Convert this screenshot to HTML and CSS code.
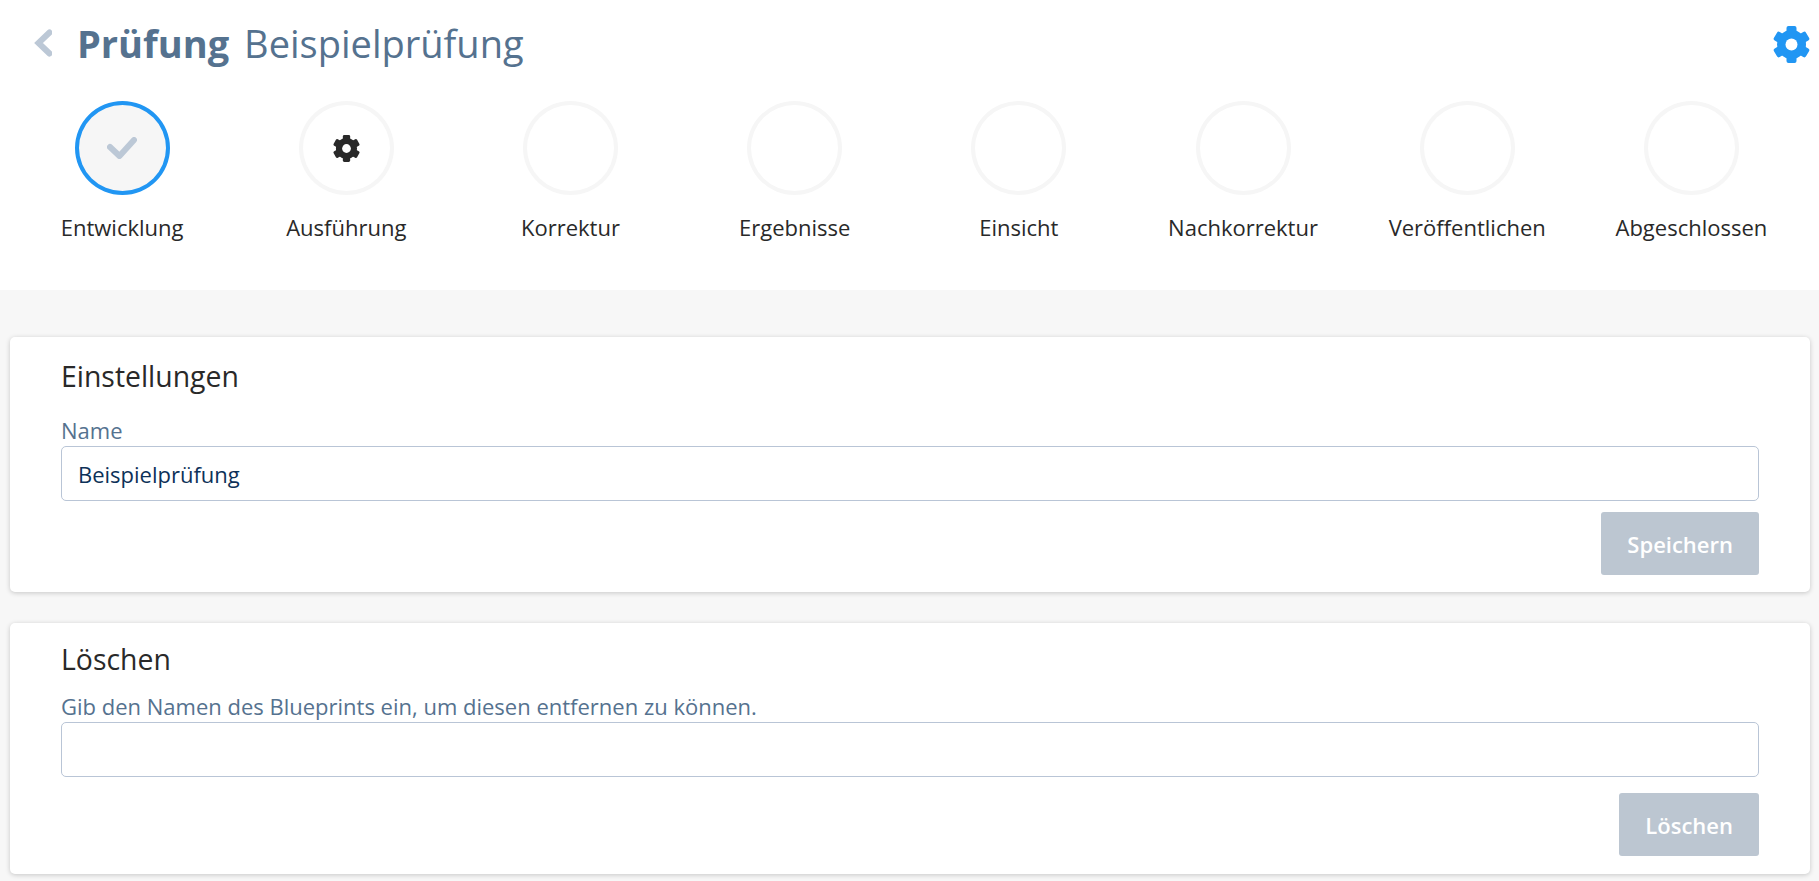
FILE: index.html
```html
<!DOCTYPE html>
<html lang="de">
<head>
<meta charset="utf-8">
<title>Prüfung Beispielprüfung</title>
<link rel="stylesheet" href="styles.css">
</head>
<body>
	<svg class="hidden">
		<symbol id="gear" viewBox="0 0 37 37">
			<circle cx="18.5" cy="18.5" r="10.2" fill="none" stroke="currentColor" stroke-width="8.6"/>
			<rect x="13.5" y="0" width="10" height="37" rx="2"/>
			<rect x="13.5" y="0" width="10" height="37" rx="2" transform="rotate(60 18.5 18.5)"/>
			<rect x="13.5" y="0" width="10" height="37" rx="2" transform="rotate(120 18.5 18.5)"/>
			<circle class="gear-hole" cx="18.5" cy="18.5" r="6"/>
		</symbol>
	</svg>

	<div class="top">
		<div class="head">
			<a class="back" href="#">
				<svg width="18" height="30" viewBox="0 0 18 30"><path d="M15.500 3.500 4.500 14l11 10.500" fill="none" stroke="#bcc8d6" stroke-width="6" stroke-linecap="round"/></svg>
			</a>
			<h1 class="page-title"><b>Prüfung</b> <span>Beispielprüfung</span></h1>
			<a class="settings" href="#"><svg width="37" height="37"><use href="#gear"/></svg></a>
		</div>
		<ul class="steps">
			<li>
				<div class="circle done">
					<svg width="30" height="22" viewBox="0 0 30 22"><path d="M3 10l9.500 9L27 3" fill="none" stroke="#bcc8d6" stroke-width="6" stroke-linejoin="round" stroke-linecap="round"/></svg>
				</div>
				Entwicklung
			</li>
			<li>
				<div class="circle running"><svg width="27" height="27"><use href="#gear"/></svg></div>
				Ausführung
			</li>
			<li><div class="circle"></div>Korrektur</li>
			<li><div class="circle"></div>Ergebnisse</li>
			<li><div class="circle"></div>Einsicht</li>
			<li><div class="circle"></div>Nachkorrektur</li>
			<li><div class="circle"></div>Veröffentlichen</li>
			<li><div class="circle"></div>Abgeschlossen</li>
		</ul>
	</div>

	<div class="content">
		<form class="card">
			<h2>Einstellungen</h2>
			<label for="name">Name</label>
			<input id="name" type="text" value="Beispielprüfung">
			<div class="actions"><button type="button">Speichern</button></div>
		</form>
		<form class="card card-delete">
			<h2>Löschen</h2>
			<label for="confirm">Gib den Namen des Blueprints ein, um diesen entfernen zu können.</label>
			<input id="confirm" type="text">
			<div class="actions"><button type="button">Löschen</button></div>
		</form>
	</div>
</body>
</html>
```

FILE: styles.css
```css
* {
	margin: 0;
	padding: 0;
	box-sizing: border-box;
}

html, body {
	height: 100%;
}

body {
	background: #f7f7f7;
	color: #292929;
	font-family: "Open Sans", "Liberation Sans", sans-serif;
	font-size: 22px;
	overflow: hidden;
}

.hidden {
	display: none;
}

.top {
	background: #fff;
	height: 290px;
	padding: 18px 10px 0;
}

.head {
	display: flex;
	align-items: center;
	height: 52px;
}

.back {
	display: flex;
	margin-left: 24px;
}

.page-title {
	flex: 1;
	margin-left: 25px;
	padding-bottom: 2px;
	color: #55728f;
	font-size: 38px;
	font-weight: 400;
	line-height: 50px;
	white-space: nowrap;
}

.page-title b {
	font-weight: 700;
	margin-right: 5px;
}

.settings {
	display: flex;
	color: #2196f3;
	fill: currentColor;
	margin-right: -1px;
}

.gear-hole {
	fill: #fff;
}

.steps {
	display: grid;
	grid-template-columns: repeat(8, 224.2px);
	list-style: none;
	margin-top: 31px;
	text-align: center;
	line-height: 30px;
}

.circle {
	display: flex;
	align-items: center;
	justify-content: center;
	width: 95px;
	height: 94px;
	margin: 0 auto 17px;
	border: 4px solid #f6f6f6;
	border-radius: 50%;
}

.circle.done {
	background: #f6f6f6;
	border-color: #2196f3;
}

.circle.running {
	color: #292929;
	fill: currentColor;
}

.content {
	padding: 47px 9px 0 10px;
}

.card {
	background: #fff;
	border-radius: 5px;
	box-shadow: 0 1px 5px rgba(0, 0, 0, .2);
	padding: 20px 51px 17px;
	margin-bottom: 31px;
}

.card h2 {
	font-size: 28.4px;
	font-weight: 400;
	line-height: 38px;
	margin-bottom: 20px;
}

.card label {
	display: block;
	color: #55728f;
	line-height: 30px;
	margin-bottom: 1px;
}

.card input {
	display: block;
	width: 100%;
	height: 55px;
	border: 1px solid #b9c5d6;
	border-radius: 5px;
	color: #0d3158;
	font-family: inherit;
	font-size: 22px;
	padding: 0 16px;
	outline: none;
}

.actions {
	display: flex;
	justify-content: flex-end;
	margin-top: 11px;
}

.actions button {
	height: 63px;
	padding: 0 26px;
	background: #bcc6d1;
	border: 0;
	border-radius: 3px;
	color: #fff;
	font-family: inherit;
	font-size: 22px;
	font-weight: 600;
}

.card-delete {
	padding-top: 17px;
	padding-bottom: 18px;
}

.card-delete h2 {
	margin-bottom: 13px;
}

.card-delete .actions {
	margin-top: 16px;
}
```
